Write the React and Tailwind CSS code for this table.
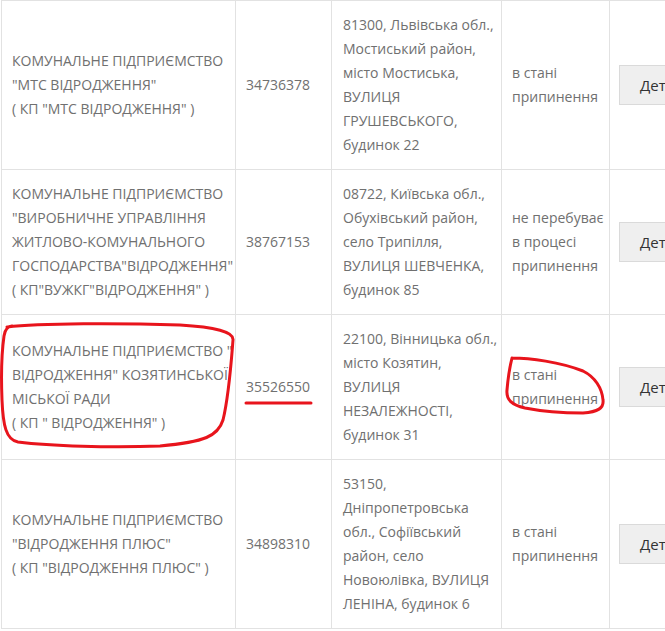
const rows = [
  {
    name: ["КОМУНАЛЬНЕ ПІДПРИЄМСТВО", "\"МТС ВІДРОДЖЕННЯ\"", "( КП \"МТС ВІДРОДЖЕННЯ\" )"],
    code: "34736378",
    address: ["81300, Львівська обл.,", "Мостиський район,", "місто Мостиська,", "ВУЛИЦЯ", "ГРУШЕВСЬКОГО,", "будинок 22"],
    status: ["в стані", "припинення"],
  },
  {
    name: [
      "КОМУНАЛЬНЕ ПІДПРИЄМСТВО",
      "\"ВИРОБНИЧНЕ УПРАВЛІННЯ",
      "ЖИТЛОВО-КОМУНАЛЬНОГО",
      "ГОСПОДАРСТВА\"ВІДРОДЖЕННЯ\"",
      "( КП\"ВУЖКГ\"ВІДРОДЖЕННЯ\" )",
    ],
    code: "38767153",
    address: ["08722, Київська обл.,", "Обухівський район,", "село Трипілля,", "ВУЛИЦЯ ШЕВЧЕНКА,", "будинок 85"],
    status: ["не перебуває", "в процесі", "припинення"],
  },
  {
    name: [
      "КОМУНАЛЬНЕ ПІДПРИЄМСТВО \"",
      "ВІДРОДЖЕННЯ\" КОЗЯТИНСЬКОЇ",
      "МІСЬКОЇ РАДИ",
      "( КП \" ВІДРОДЖЕННЯ\" )",
    ],
    code: "35526550",
    address: ["22100, Вінницька обл.,", "місто Козятин,", "ВУЛИЦЯ", "НЕЗАЛЕЖНОСТІ,", "будинок 31"],
    status: ["в стані", "припинення"],
  },
  {
    name: ["КОМУНАЛЬНЕ ПІДПРИЄМСТВО", "\"ВІДРОДЖЕННЯ ПЛЮС\"", "( КП \"ВІДРОДЖЕННЯ ПЛЮС\" )"],
    code: "34898310",
    address: ["53150,", "Дніпропетровська", "обл., Софіївський", "район, село", "Новоюлівка, ВУЛИЦЯ", "ЛЕНІНА, будинок 6"],
    status: ["в стані", "припинення"],
  },
];

function Lines({ items }) {
  return items.map((t, i) => (
    <span key={i} className="block whitespace-nowrap">
      {t}
    </span>
  ));
}

export default function App() {
  return (
    <div
      className="relative w-[665px] h-[631px] overflow-hidden bg-white text-[#707070] text-[14px] leading-[24px]"
      style={{ fontFamily: '"Open Sans", "Noto Sans", sans-serif' }}
    >
      <table className="border-collapse ml-px w-[760px] table-fixed">
        <colgroup>
          <col className="w-[234px]" />
          <col className="w-[96px]" />
          <col className="w-[170px]" />
          <col className="w-[108px]" />
          <col className="w-[152px]" />
        </colgroup>
        <tbody>
          {rows.map((r) => (
            <tr key={r.code}>
              <td className="border border-[#e2e2e2] px-[10px] py-3 align-middle">
                <Lines items={r.name} />
              </td>
              <td className="border border-[#e2e2e2] px-[10px] py-3 align-middle">{r.code}</td>
              <td className="border border-[#e2e2e2] px-[11px] py-3 align-middle">
                <Lines items={r.address} />
              </td>
              <td className="border border-[#e2e2e2] px-[10px] py-3 align-middle">
                <Lines items={r.status} />
              </td>
              <td className="border border-[#e2e2e2] pl-[9px] py-3 align-middle">
                <button className="h-[40px] px-5 bg-[#efefef] border border-[#dadada] text-[#333] text-[15px] whitespace-nowrap">
                  Детальніше
                </button>
              </td>
            </tr>
          ))}
        </tbody>
      </table>

      <svg className="absolute inset-0 pointer-events-none" width="665" height="631" fill="none">
        <path
          d="M7 327 C40 323 120 323 180 325 C215 327 234 332 233 340 C231 365 229 395 223 420 C218 436 205 442 160 446 C110 448 50 446 18 442 C6 440 3 425 2 400 C1 375 2 350 4 336 C5 330 7 326 12 326"
          stroke="#e8141c"
          strokeWidth="3"
          strokeLinecap="round"
        />
        <path d="M246 403 L311 403" stroke="#e8141c" strokeWidth="3" strokeLinecap="round" />
        <path
          d="M512 358 C530 358 560 362 583 371 C595 377 602 388 603 400 C604 408 598 412 583 413 C565 413 545 412 525 408 C512 405 506 400 507 390 C508 378 510 366 512 358"
          stroke="#e8141c"
          strokeWidth="3"
          strokeLinecap="round"
        />
      </svg>
    </div>
  );
}
